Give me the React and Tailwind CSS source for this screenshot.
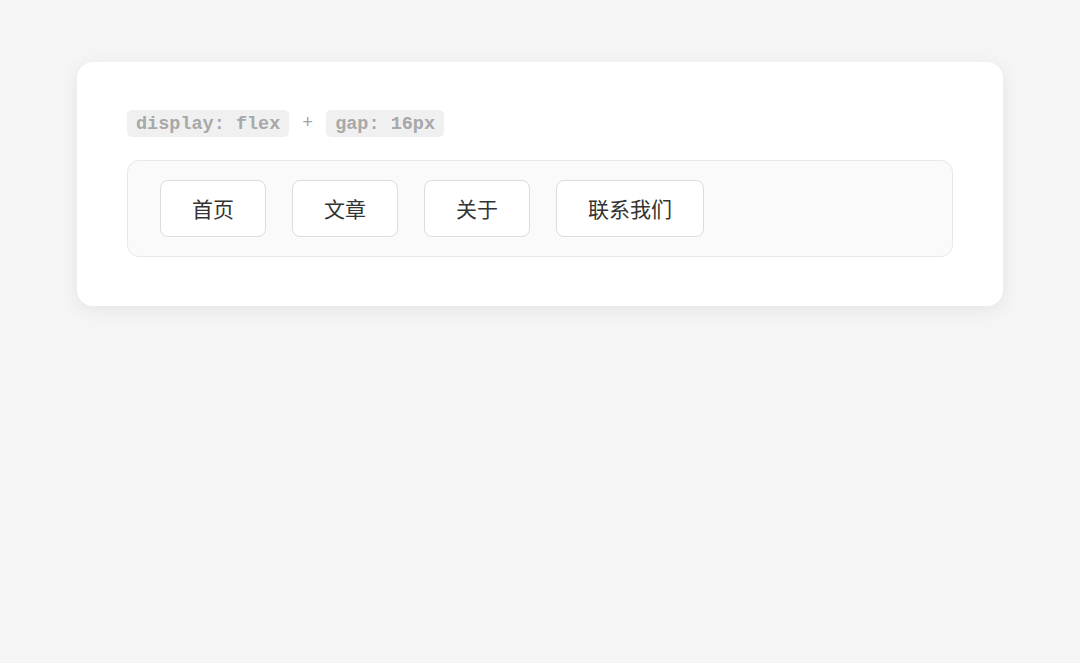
import React from "react";

const navItems = ["首页", "文章", "关于", "联系我们"];

const Code = ({ children }) => (
  <span className="inline-flex h-[27px] items-center rounded-[5px] bg-[#f0f0f0] px-[9px] pt-[2px] font-['Liberation_Mono',monospace] text-[18.5px] font-bold text-[#a8a8a8]">
    {children}
  </span>
);

export default function App() {
  return (
    <div className="min-h-[663px] bg-[#f5f5f5] px-[77px] pt-[62px]">
      <div className="rounded-[16px] bg-white px-[50px] pt-[48px] pb-[49px] shadow-[0_4px_18px_rgba(0,0,0,0.07)]">
        {/* label */}
        <div className="flex items-center gap-[13px] font-['Liberation_Mono',monospace] text-[18px] text-[#a3a3a3]">
          <Code>display: flex</Code>
          <span>+</span>
          <Code>gap: 16px</Code>
        </div>

        {/* demo */}
        <div className="mt-[23px] flex gap-[26px] rounded-[12px] border border-[#e8e8e8] bg-[#fafafa] px-[32px] py-[19px]">
          {navItems.map((item) => (
            <button
              key={item}
              className="flex h-[57px] items-center rounded-[8px] border border-[#dcdcdc] bg-white px-[31px] font-['Noto_Sans_CJK_SC',sans-serif] text-[21px] text-[#333]"
            >
              {item}
            </button>
          ))}
        </div>
      </div>
    </div>
  );
}
